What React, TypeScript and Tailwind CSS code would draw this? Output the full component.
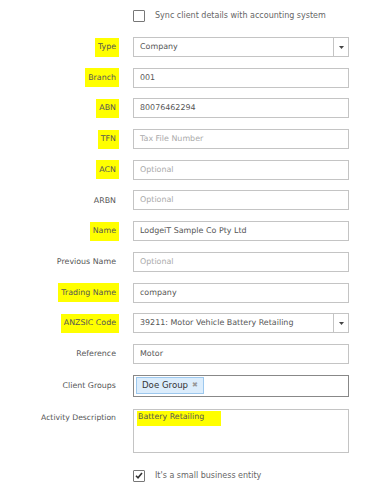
import React from "react";

type Row = {
  label: string;
  value?: string;
  placeholder?: string;
  hl?: boolean;
  select?: boolean;
};

const rows: Row[] = [
  { label: "Type", value: "Company", hl: true, select: true },
  { label: "Branch", value: "001", hl: true },
  { label: "ABN", value: "80076462294", hl: true },
  { label: "TFN", placeholder: "Tax File Number", hl: true },
  { label: "ACN", placeholder: "Optional", hl: true },
  { label: "ARBN", placeholder: "Optional" },
  { label: "Name", value: "LodgeiT Sample Co Pty Ltd", hl: true },
  { label: "Previous Name", placeholder: "Optional" },
  { label: "Trading Name", value: "company", hl: true },
  { label: "ANZSIC Code", value: "39211: Motor Vehicle Battery Retailing", hl: true, select: true },
  { label: "Reference", value: "Motor" },
];

function Label({ text, hl }: { text: string; hl?: boolean }) {
  return (
    <div className="w-[119px] shrink-0 flex justify-end">
      <span
        className={
          "h-[19px] px-[3px] flex items-center text-[7.9px] text-[#555] " +
          (hl ? "bg-[#ffff00]" : "")
        }
      >
        {text}
      </span>
    </div>
  );
}

function Field({ row }: { row: Row }) {
  return (
    <div className="flex items-center gap-[14px]">
      <Label text={row.label} hl={row.hl} />
      <div className="w-[216px] h-[20px] border border-[#c4c4c4] bg-white flex items-center">
        <span
          className={
            "flex-1 pl-[6px] text-[7.95px] whitespace-nowrap " +
            (row.value ? "text-[#555]" : "text-[#aaa]")
          }
        >
          {row.value ?? row.placeholder}
        </span>
        {row.select && (
          <div className="w-[15px] h-full border-l border-[#c4c4c4] flex items-center justify-center">
            <svg width="5" height="3" viewBox="0 0 5 3">
              <path d="M0 0h5L2.5 3z" fill="#444" />
            </svg>
          </div>
        )}
      </div>
    </div>
  );
}

function Checkbox({ checked }: { checked?: boolean }) {
  return (
    <div className="w-[12px] h-[12px] border border-[#777] rounded-[1px] bg-white flex items-center justify-center">
      {checked && (
        <svg width="8" height="7" viewBox="0 0 8 7">
          <path d="M1 3.8l2 2L7 1" stroke="#333" strokeWidth="1.6" fill="none" />
        </svg>
      )}
    </div>
  );
}

export default function App() {
  return (
    <div
      className="w-[370px] h-[486px] bg-white pt-[10px]"
      style={{ fontFamily: '"DejaVu Sans", Verdana, sans-serif' }}
    >
      {/* Sync checkbox */}
      <div className="flex items-center gap-[10px] pl-[133px] h-[12px]">
        <Checkbox />
        <span className="text-[8px] text-[#666]">Sync client details with accounting system</span>
      </div>

      <div className="flex flex-col gap-[10.7px] mt-[15px]">
        {rows.map((r) => (
          <Field key={r.label} row={r} />
        ))}

        {/* Client Groups */}
        <div className="flex items-center gap-[14px]">
          <Label text="Client Groups" />
          <div className="w-[216px] h-[22px] border border-[#888] bg-white flex items-center pl-[2px]">
            <span className="h-[17px] px-[5px] flex items-center gap-[4px] bg-[#dcedfc] border border-[#9dc8ee] text-[8.6px] text-[#333]">
              Doe Group
              <span className="text-[7px] text-[#999] leading-none">✖</span>
            </span>
          </div>
        </div>

        {/* Activity Description */}
        <div className="flex items-start gap-[14px] mt-[1.3px]">
          <div className="w-[119px] shrink-0 flex justify-end">
            <span className="h-[19px] px-[3px] flex items-center text-[7.7px] text-[#555]">
              Activity Description
            </span>
          </div>
          <div className="w-[216px] h-[44px] border border-[#c4c4c4] bg-white pl-[3px] pt-[1px] flex items-start">
            <span className="w-[84px] h-[15px] bg-[#ffff00] text-[7.9px] text-[#555] pl-[1px] flex items-start leading-[11px]">
              Battery Retailing
            </span>
          </div>
        </div>
      </div>

      <div className="flex items-center gap-[10px] pl-[133px] mt-[17px]">
        <Checkbox checked />
        <span className="text-[8px] text-[#666]">It's a small business entity</span>
      </div>
    </div>
  );
}
